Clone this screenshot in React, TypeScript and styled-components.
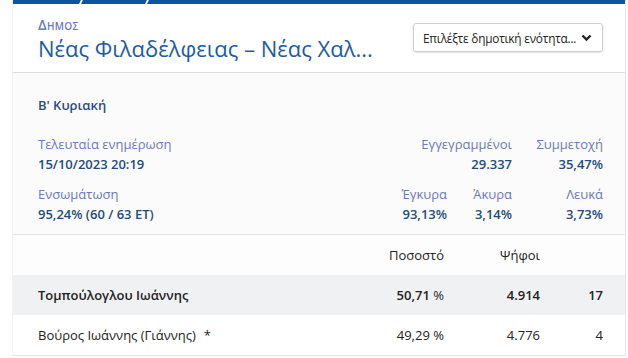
import styled, { createGlobalStyle } from 'styled-components';

const GlobalStyle = createGlobalStyle`
    html, body {
        margin: 0;
        padding: 0;
        background: #fff;
    }
    body {
        font-family: 'Open Sans', 'Noto Sans', sans-serif;
    }
`;

const STATS_TOP = [
    { label: 'Εγγεγραμμένοι', value: '29.337', width: 120 },
    { label: 'Συμμετοχή', value: '35,47%', width: 91 },
];

const STATS_BOTTOM = [
    { label: 'Έγκυρα', value: '93,13%', width: 56 },
    { label: 'Άκυρα', value: '3,14%', width: 65 },
    { label: 'Λευκά', value: '3,73%', width: 91 },
];

const CANDIDATES = [
    { name: 'Τομπούλογλου Ιωάννης', pct: '50,71', votes: '4.914', seats: '17', lead: true },
    { name: 'Βούρος Ιωάννης (Γιάννης)', pct: '49,29', votes: '4.776', seats: '4', lead: false, star: true },
];

export default function App() {
    return (
        <>
            <GlobalStyle />
            <Card>
                <TopBar>
                    <Slash />
                    <Slash />
                </TopBar>
                <Header>
                    <TitleBlock>
                        <Kicker>Δημος</Kicker>
                        <Title>Νέας Φιλαδέλφειας – Νέας Χαλ...</Title>
                    </TitleBlock>
                    <Select>
                        <span>Επιλέξτε δημοτική ενότητα...</span>
                        <svg width="11" height="8" viewBox="0 0 11 8">
                            <path d="M1.5 1.5 L5.5 5.5 L9.5 1.5" fill="none" stroke="#222" strokeWidth="2.4" />
                        </svg>
                    </Select>
                </Header>
                <Stats>
                    <Round>Β' Κυριακή</Round>
                    <StatRow>
                        <StatCell>
                            <Label>Τελευταία ενημέρωση</Label>
                            <Value>15/10/2023 20:19</Value>
                        </StatCell>
                        <RightGroup>
                            {STATS_TOP.map((s) => (
                                <StatCell key={s.label} $align="right" $width={s.width}>
                                    <Label>{s.label}</Label>
                                    <Value>{s.value}</Value>
                                </StatCell>
                            ))}
                        </RightGroup>
                    </StatRow>
                    <StatRow>
                        <StatCell>
                            <Label>Ενσωμάτωση</Label>
                            <Value>95,24% (60 / 63 ΕΤ)</Value>
                        </StatCell>
                        <RightGroup>
                            {STATS_BOTTOM.map((s) => (
                                <StatCell key={s.label} $align="right" $width={s.width}>
                                    <Label>{s.label}</Label>
                                    <Value>{s.value}</Value>
                                </StatCell>
                            ))}
                        </RightGroup>
                    </StatRow>
                </Stats>
                <Table>
                    <HeadRow>
                        <NameCell />
                        <PctCell>Ποσοστό</PctCell>
                        <VotesCell>Ψήφοι</VotesCell>
                        <SeatsCell />
                    </HeadRow>
                    {CANDIDATES.map((c) => (
                        <Row key={c.name} $lead={c.lead}>
                            <NameCell>
                                {c.name}
                                {c.star && <Star>*</Star>}
                            </NameCell>
                            <PctCell>
                                {c.pct} <Unit>%</Unit>
                            </PctCell>
                            <VotesCell>{c.votes}</VotesCell>
                            <SeatsCell>{c.seats}</SeatsCell>
                        </Row>
                    ))}
                </Table>
            </Card>
        </>
    );
}

const Card = styled.div`
    margin-left: 12px;
    width: 612px;
    background: #fff;
    border-right: 1px solid #e6e6e6;
    border-left: 1px solid #f2f2f2;
`;

const TopBar = styled.div`
    height: 4px;
    background: #0b55a2;
    display: flex;
    gap: 64px;
    padding-left: 67px;
`;

const Slash = styled.div`
    width: 2px;
    height: 4px;
    background: #fff;
    transform: skewX(-25deg);
`;

const Header = styled.div`
    display: flex;
    justify-content: space-between;
    align-items: flex-start;
    padding: 12px 22px 0 25px;
    height: 56px;
    border-bottom: 1px solid #dedede;
`;

const TitleBlock = styled.div`
    display: flex;
    flex-direction: column;
`;

const Kicker = styled.div`
    font-size: 14px;
    font-weight: 600;
    font-variant: small-caps;
    color: #6b78bd;
    line-height: 17px;
    letter-spacing: 0.3px;
`;

const Title = styled.div`
    font-size: 22px;
    color: #1d5c9f;
    line-height: 30px;
    white-space: nowrap;
`;

const Select = styled.div`
    margin-top: 7px;
    width: 190px;
    height: 29px;
    box-sizing: border-box;
    border: 1px solid #cfcfcf;
    border-radius: 3px;
    box-shadow: 0 1px 2px rgba(0, 0, 0, 0.12);
    display: flex;
    align-items: center;
    justify-content: space-between;
    padding: 0 10px 0 9px;
    font-size: 11.8px;
    color: #222;
    white-space: nowrap;
    letter-spacing: -0.2px;
`;

const Stats = styled.div`
    background: #fbfbfb;
    padding: 23px 22px 0 25px;
    border-bottom: 1px solid #e3e3e3;
`;

const Round = styled.div`
    font-size: 13px;
    font-weight: 600;
    color: #2d4d7c;
    line-height: 18px;
    margin-bottom: 20px;
`;

const StatRow = styled.div`
    display: flex;
    justify-content: space-between;
    margin-bottom: 10px;
`;

const RightGroup = styled.div`
    display: flex;
`;

const StatCell = styled.div<{ $align?: 'right'; $width?: number }>`
    display: flex;
    flex-direction: column;
    text-align: ${({ $align }) => $align || 'left'};
    width: ${({ $width }) => ($width ? `${$width}px` : 'auto')};
`;

const Label = styled.div`
    font-size: 13px;
    color: #6a7ab6;
    line-height: 20px;
    white-space: nowrap;
`;

const Value = styled.div`
    font-size: 13px;
    font-weight: 600;
    color: #234b7c;
    line-height: 20px;
    white-space: nowrap;
`;

const Table = styled.div`
    border-bottom: 1px solid #e3e3e3;
`;

const HeadRow = styled.div`
    display: flex;
    align-items: center;
    height: 40px;
    padding: 0 22px 0 25px;
    background: #fdfdfd;
    font-size: 13px;
    font-weight: 500;
    color: #222;
`;

const Row = styled.div<{ $lead: boolean }>`
    display: flex;
    align-items: center;
    height: 40px;
    padding: 0 22px 0 25px;
    background: ${({ $lead }) => ($lead ? '#f0f1f3' : '#fff')};
    font-size: 13px;
    font-weight: ${({ $lead }) => ($lead ? 600 : 400)};
    color: #222;
`;

const NameCell = styled.div`
    flex: 1;
    white-space: nowrap;
`;

const PctCell = styled.div`
    width: 120px;
    text-align: right;
`;

const VotesCell = styled.div`
    width: 96px;
    text-align: right;
`;

const SeatsCell = styled.div`
    width: 63px;
    text-align: right;
`;

const Unit = styled.span`
    font-weight: 400;
`;

const Star = styled.span`
    margin-left: 8px;
    font-weight: 400;
`;
